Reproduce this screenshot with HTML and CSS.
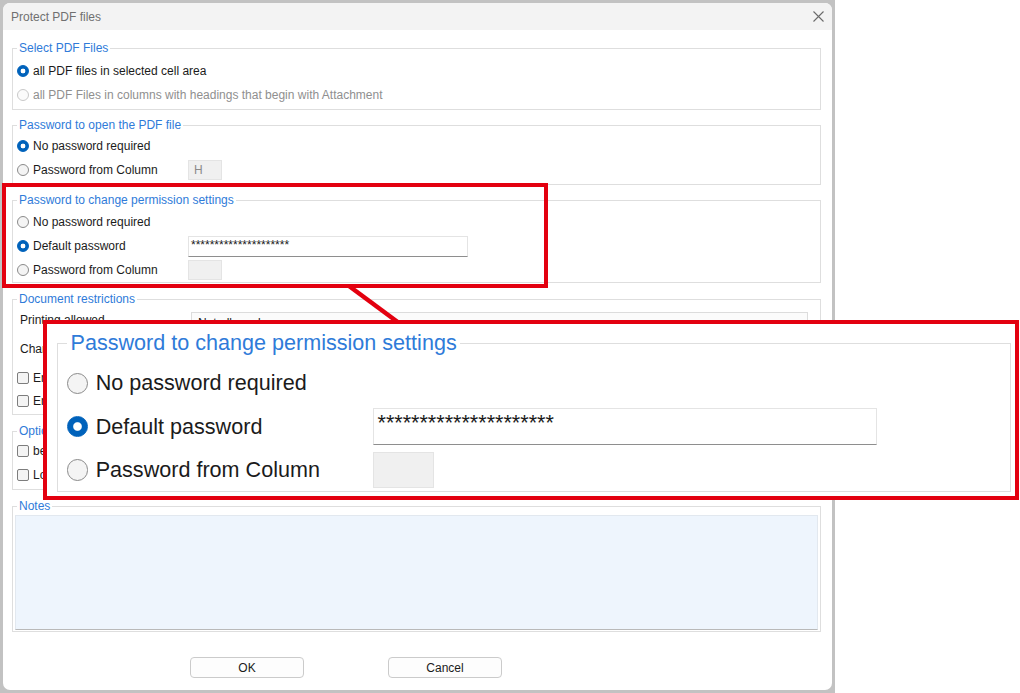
FILE: index.html
```html
<!DOCTYPE html>
<html>
<head>
<meta charset="utf-8">
<title>Protect PDF files</title>
<link rel="stylesheet" href="styles.css">
</head>
<body>
<div id="Stage">
    <div id="Backdrop">
        <div id="Dialog">
            <div class="title_bar">
                <span class="title_text">Protect PDF files</span>
                <svg class="close_icon" width="11" height="11" viewBox="0 0 11 11"><path d="M0.5 0.5 L10.5 10.5 M10.5 0.5 L0.5 10.5" stroke="#6b6b6b" stroke-width="1.1" fill="none"/></svg>
            </div>
            <div class="dialog_body">
                <fieldset class="group files">
                    <legend>Select PDF Files</legend>
                    <label class="row"><input type="radio" name="source" checked>all PDF files in selected cell area</label>
                    <label class="row disabled"><input type="radio" name="source" disabled>all PDF Files in columns with headings that begin with Attachment</label>
                </fieldset>

                <fieldset class="group openpw">
                    <legend>Password to open the PDF file</legend>
                    <label class="row"><input type="radio" name="openpw" checked>No password required</label>
                    <div class="row"><label class="caption"><input type="radio" name="openpw">Password from Column</label><span class="column_box">H</span></div>
                </fieldset>

                <fieldset class="group perm">
                    <legend>Password to change permission settings</legend>
                    <label class="row"><input type="radio" name="permpw">No password required</label>
                    <div class="row"><label class="caption"><input type="radio" name="permpw" checked>Default password</label><span class="password_box">*********************</span></div>
                    <div class="row"><label class="caption"><input type="radio" name="permpw">Password from Column</label><span class="column_box"></span></div>
                </fieldset>

                <fieldset class="group restrict">
                    <legend>Document restrictions</legend>
                    <div class="select_row"><span class="plain_caption">Printing allowed</span><span class="select_box">Not allowed</span></div>
                    <div class="select_row"><span class="plain_caption">Changes allowed</span><span class="select_box">Not allowed</span></div>
                    <label class="row"><input type="checkbox">Enable copying of text, images and other content</label>
                    <label class="row"><input type="checkbox">Enable text access for screen reader devices</label>
                </fieldset>

                <fieldset class="group options">
                    <legend>Options</legend>
                    <label class="row"><input type="checkbox">before protecting, keep a copy of the original file</label>
                    <label class="row"><input type="checkbox">Log the result in a new worksheet</label>
                </fieldset>

                <fieldset class="group notes">
                    <legend>Notes</legend>
                    <div class="notes_area"></div>
                </fieldset>

                <div class="button_row">
                    <button class="dlg_button">OK</button>
                    <button class="dlg_button">Cancel</button>
                </div>
            </div>
        </div>
    </div>

    <div class="highlight"></div>
    <svg class="connector" width="1020" height="693" viewBox="0 0 1020 693"><line x1="349" y1="286" x2="399" y2="323" stroke="#e3000f" stroke-width="4.5"/></svg>

    <div class="callout">
        <div class="zoomed">
            <fieldset class="group perm wide">
                <legend>Password to change permission settings</legend>
                <label class="row"><input type="radio" name="zpermpw">No password required</label>
                <div class="row"><label class="caption"><input type="radio" name="zpermpw" checked>Default password</label><span class="password_box">*********************</span></div>
                <div class="row"><label class="caption"><input type="radio" name="zpermpw">Password from Column</label><span class="column_box"></span></div>
            </fieldset>
        </div>
    </div>
</div>
</body>
</html>
```

FILE: styles.css
```css
html,body{
    margin:0;
    background:#ffffff;
    font-family:"Liberation Sans", Arial, sans-serif;
    font-size:12px;
    color:#1b1b1b;
}
#Stage
{
    position:relative;
    width:1020px;
    height:693px;
    overflow:hidden;
}
#Backdrop
{
    width:835px;
    height:693px;
    padding:3px;
    box-sizing:border-box;
    background:#c2c2c2;
}
#Dialog
{
    height:100%;
    background:#ffffff;
    border-radius:7px;
    overflow:hidden;
}
.title_bar
{
    display:flex;
    align-items:center;
    justify-content:space-between;
    height:27px;
    padding:0 8px 0 8px;
    background:#f3f3f3;
}
.title_text
{
    color:#707070;
}
.dialog_body
{
    padding:10px 11px 0 9px;
}

/* group boxes */
.group
{
    margin:7px 0 0 0;
    padding:2px 4px 2px 4px;
    border:1px solid #dedede;
    min-width:0;
}
.group > legend
{
    padding:0 2px;
    line-height:16px;
    color:#2f7bd9;
}
.group.files
{
    margin-top:0;
    padding-top:3px;
}
.group.openpw
{
    padding-top:1px;
}
.group.perm
{
    padding-bottom:0;
}
.group.restrict
{
    margin-top:8px;
    padding-top:5px;
}
.group.restrict .row
{
    height:23px;
}
.group.options
{
    margin-top:8px;
    padding-top:0;
}
.group.notes
{
    margin-top:8px;
    padding:1px 2px 1px 2px;
}
.group.notes > legend
{
    margin-left:2px;
}
.row
{
    display:flex;
    align-items:center;
    height:24px;
}
.row.disabled
{
    color:#8f8f8f;
}
.caption
{
    display:flex;
    align-items:center;
    width:171px;
}
.plain_caption
{
    width:171px;
    padding-left:3px;
    line-height:16px;
}
.select_row
{
    display:flex;
    align-items:flex-start;
    height:22px;
    margin-bottom:7px;
}
.select_row + .select_row
{
    margin-bottom:3px;
}

/* radios and checkboxes */
input[type="radio"], input[type="checkbox"]
{
    appearance:none;
    width:12px;
    height:12px;
    margin:0 4px 0 0;
    border:1px solid #8a8a8a;
    background:#f4f4f4;
    box-sizing:border-box;
    flex:0 0 auto;
}
input[type="radio"]
{
    border-radius:50%;
}
input[type="radio"]:checked
{
    border-color:#0062bb;
    background:radial-gradient(circle, #ffffff 0 2.1px, #0062bb 2.7px);
}
input[type="radio"]:disabled
{
    border-color:#c9c9c9;
    background:#fbfbfb;
}
input[type="checkbox"]
{
    border-radius:2px;
    border-color:#7d7d7d;
}

/* fields */
.column_box
{
    width:34px;
    height:20px;
    box-sizing:border-box;
    padding-left:5px;
    line-height:18px;
    border:1px solid #e4e4e4;
    background:#f0f0f0;
    color:#8a8a8a;
}
.password_box
{
    width:280px;
    height:21px;
    box-sizing:border-box;
    padding-left:2px;
    line-height:16px;
    border:1px solid #e4e4e4;
    border-bottom:1px solid #8e8e8e;
    background:#ffffff;
}
.select_box
{
    width:617px;
    height:22px;
    box-sizing:border-box;
    padding-left:6px;
    line-height:20px;
    border:1px solid #dcdcdc;
    background:#fbfbfb;
}
.notes_area
{
    height:115px;
    background:#eef5fd;
    border:1px solid #e2e8ef;
    border-bottom:1px solid #b9b9b9;
    box-sizing:border-box;
}
.button_row
{
    display:flex;
    gap:84px;
    margin-top:25px;
    padding-left:178px;
}
.dlg_button
{
    width:114px;
    height:21px;
    padding:0;
    border:1px solid #cbcbcb;
    border-radius:4px;
    background:#fdfdfd;
    font-family:inherit;
    font-size:12px;
    color:#1b1b1b;
}

/* annotation overlay */
.highlight
{
    position:absolute;
    left:2px;
    top:183px;
    width:546px;
    height:105px;
    box-sizing:border-box;
    border:4px solid #e3000f;
}
.connector
{
    position:absolute;
    left:0;
    top:0;
}
.callout
{
    position:absolute;
    left:43px;
    top:320px;
    width:976px;
    height:180px;
    box-sizing:border-box;
    border:4px solid #e3000f;
    background:#ffffff;
    overflow:hidden;
}
.zoomed
{
    zoom:1.8;
    padding:3px 0 0 5.5px;
}
.group.wide
{
    width:530px;
    box-sizing:border-box;
    margin-top:0;
    padding-left:5px;
}
.group.wide .caption
{
    width:170px;
}
```
